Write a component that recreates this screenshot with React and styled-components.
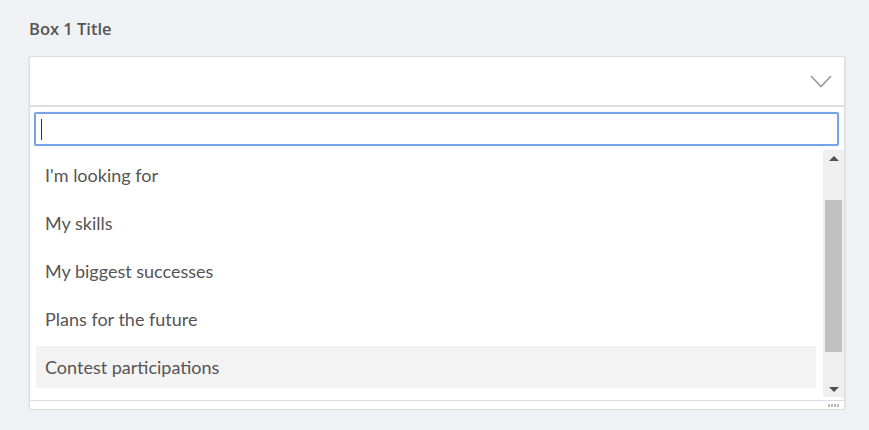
import styled, { createGlobalStyle } from 'styled-components';

const Global = createGlobalStyle`
  html, body { margin: 0; padding: 0; background: #f0f1f5; }
  body { font-family: "Lato", "Liberation Sans", sans-serif; }
`;

const items = [
  "I'm looking for",
  'My skills',
  'My biggest successes',
  'Plans for the future',
  'Contest participations',
];

const App = () => {
  return (<S.Page>
      <Global />
      <S.Title>Box 1 Title</S.Title>
      <S.Panel>
        <S.Head>
          <svg width="22" height="13" viewBox="0 0 22 13">
            <path d="M1 1 L11 11.5 L21 1" fill="none" stroke="#9a9a9a" strokeWidth="1.6" />
          </svg>
        </S.Head>
        <S.Drop>
          <S.Search><S.Caret /></S.Search>
          <S.ListWrap>
            <S.List>
              {items.map((t, i) => (
                <S.Item key={t} $active={i === items.length - 1}>{t}</S.Item>
              ))}
            </S.List>
            <S.Bar>
              <S.Arrow $up />
              <S.Thumb />
              <S.Arrow />
            </S.Bar>
          </S.ListWrap>
          <S.Foot><S.Grip /></S.Foot>
        </S.Drop>
      </S.Panel>
    </S.Page>)
};

export default App;

const S = {
  Page: styled.div`
    padding: 19px 0 0 29px;
    width: 816px;
  `,
  Title: styled.div`
    font-family: "Open Sans", "Lato", sans-serif;
    font-size: 16.5px;
    font-weight: 600;
    color: #555;
    height: 20px;
    line-height: 20px;
    margin-bottom: 17px;
  `,
  Panel: styled.div`
    background: #fff;
    border: 1px solid #dcdcdc;
    border-radius: 2px;
    box-shadow: 0 1px 2px rgba(0,0,0,0.12);
  `,
  Head: styled.div`
    height: 48px;
    display: flex;
    align-items: center;
    justify-content: flex-end;
    padding-right: 12px;
    border-bottom: 2px solid #dedede;
    svg { margin-top: 1px; }
  `,
  Drop: styled.div`
    display: flex;
    flex-direction: column;
  `,
  Search: styled.div`
    margin: 5px 5px 4px 4px;
    height: 30px;
    border: 2px solid #77a4e8;
    border-radius: 2px;
    box-shadow: 0 0 1px rgba(80,140,230,0.5);
    display: flex;
    align-items: center;
    padding-left: 5px;
  `,
  Caret: styled.span`
    width: 1px;
    height: 21px;
    background: #333;
  `,
  ListWrap: styled.div`
    display: flex;
    height: 247px;
  `,
  List: styled.ul`
    flex: 1;
    list-style: none;
    margin: 0;
    padding: 4px 7px 0 6px;
    overflow: hidden;
    display: flex;
    flex-direction: column;
    gap: 6px;
  `,
  Item: styled.li`
    flex: none;
    height: 42px;
    padding-left: 9px;
    display: flex;
    align-items: center;
    font-size: 18px;
    color: #555;
    background: ${p => p.$active ? '#f3f3f3' : 'transparent'};
  `,
  Bar: styled.div`
    width: 21px;
    background: #efefef;
    display: flex;
    flex-direction: column;
    align-items: center;
  `,
  Arrow: styled.div`
    height: 16px;
    width: 21px;
    display: flex;
    align-items: center;
    justify-content: center;
    &::before {
      content: '';
      border-left: 5px solid transparent;
      border-right: 5px solid transparent;
      ${p => p.$up ? 'border-bottom: 5px solid #505050;' : 'border-top: 5px solid #505050;'}
    }
  `,
  Thumb: styled.div`
    width: 17px;
    height: 152px;
    margin: 34px 0 auto;
    background: #c1c1c1;
  `,
  Foot: styled.div`
    margin-top: 3px;
    height: 8px;
    border-top: 1px solid #dcdcdc;
    display: flex;
    justify-content: flex-end;
    align-items: center;
    padding-right: 4px;
  `,
  Grip: styled.div`
    width: 12px;
    height: 3px;
    background: repeating-linear-gradient(90deg, #c9b79a 0 1px, #a9c2d8 1px 2px, #fff 2px 3px);
  `,
};
